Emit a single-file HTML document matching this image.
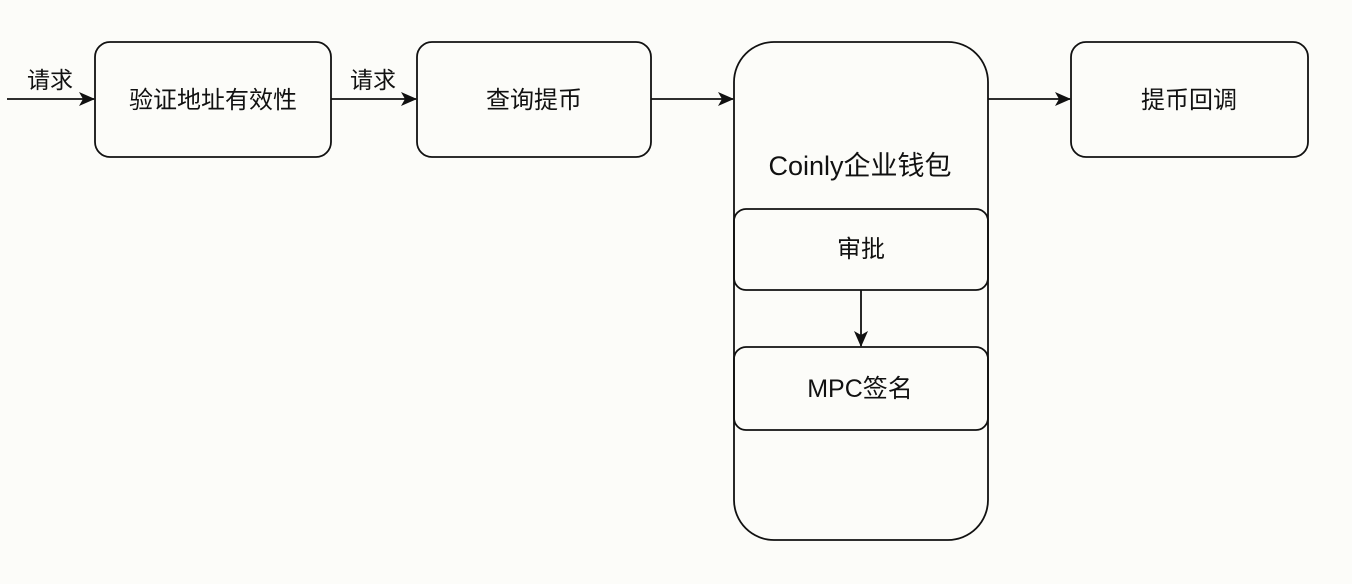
<!DOCTYPE html>
<html><head><meta charset="utf-8"><style>
html,body{margin:0;padding:0;background:#fcfcf9;}
svg{display:block}
text{font-family:"Liberation Sans","Noto Sans CJK SC",sans-serif;fill:#111;}
</style></head><body>
<svg width="1352" height="584" viewBox="0 0 1352 584" xmlns="http://www.w3.org/2000/svg">
<defs><marker id="a" viewBox="0 0 16 14" refX="15" refY="7" markerWidth="16" markerHeight="14" markerUnits="userSpaceOnUse" orient="auto"><path d="M0 0 L16 7 L0 14 L4 7 Z" fill="#111"/></marker></defs>
<g fill="none" stroke="#111" stroke-width="1.8">
<rect x="95" y="42" width="236" height="115" rx="15"/>
<rect x="417" y="42" width="234" height="115" rx="15"/>
<rect x="734" y="42" width="254" height="498" rx="40"/>
<rect x="734" y="209" width="254" height="81" rx="12"/>
<rect x="734" y="347" width="254" height="83" rx="12"/>
<rect x="1071" y="42" width="237" height="115" rx="15"/>
<line x1="7" y1="99" x2="94" y2="99" marker-end="url(#a)"/>
<line x1="331" y1="99" x2="416" y2="99" marker-end="url(#a)"/>
<line x1="651" y1="99" x2="733" y2="99" marker-end="url(#a)"/>
<line x1="988" y1="99" x2="1070" y2="99" marker-end="url(#a)"/>
<line x1="861" y1="290" x2="861" y2="346" marker-end="url(#a)"/>
</g>
<g text-anchor="middle">
<text x="50" y="88" font-size="23">请求</text>
<text x="373" y="88" font-size="23">请求</text>
<text x="213" y="108" font-size="24">验证地址有效性</text>
<text x="534" y="108" font-size="24">查询提币</text>
<text x="860" y="175" font-size="27">Coinly企业钱包</text>
<text x="861" y="257" font-size="24">审批</text>
<text x="860" y="397" font-size="25">MPC签名</text>
<text x="1189" y="108" font-size="24">提币回调</text>
</g>
</svg>
</body></html>
